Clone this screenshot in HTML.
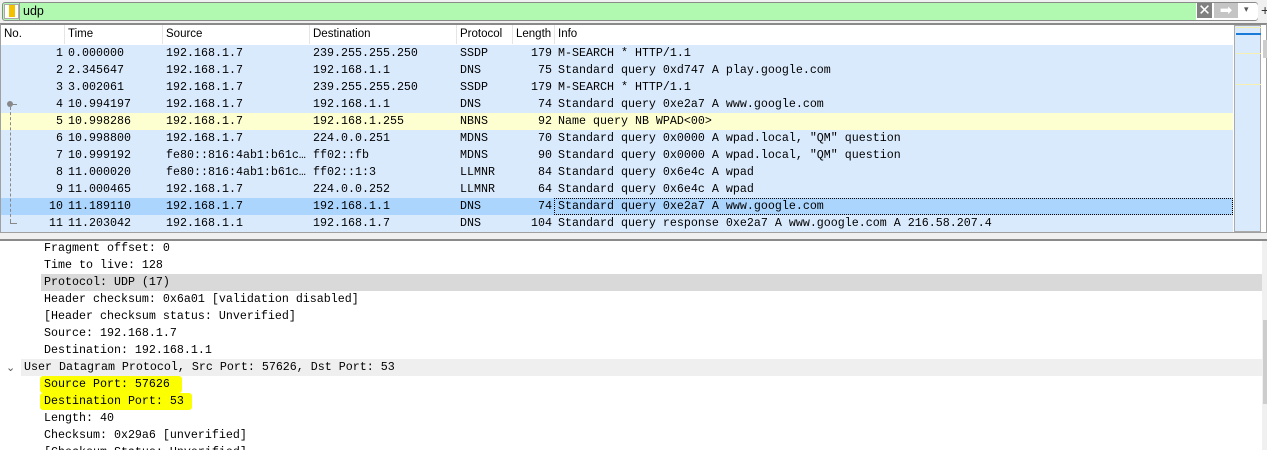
<!DOCTYPE html>
<html><head><style>
*{margin:0;padding:0;box-sizing:border-box}
html,body{width:1267px;height:450px;overflow:hidden}
body{background:#f0f0f0;position:relative;font-family:"Liberation Mono",monospace;font-size:11.66px;color:#000}
.a{position:absolute;white-space:pre}
.hdr{font-family:"Liberation Sans",sans-serif;font-size:11.5px}
.row{position:absolute;left:1px;width:1232px;height:17px;background:#daeafd}
.row span{position:absolute;top:1px;white-space:pre}
.d{position:absolute;height:17px;white-space:pre;line-height:17px}
</style></head><body>
<div class="a" style="left:2px;top:2px;width:1256px;height:19px;background:#b1f9b1;border:1px solid #8a8a8a;border-radius:3px"></div>
<div class="a" style="left:4px;top:4px;width:15px;height:15px;background:#fff;border:1px solid #aaa"></div>
<div class="a" style="left:9px;top:5px;width:6px;height:12px;background:#f2c200"></div>
<div class="a" style="left:19px;top:3px;height:17px;border-left:1px solid #999"></div>
<div class="a hdr" style="left:23px;top:4px;font-size:12.5px">udp</div>
<div class="a" style="left:1196px;top:3px;width:62px;height:17px;background:#fff;border-radius:0 3px 3px 0"></div>
<div class="a" style="left:1197px;top:3px;width:15px;height:15px;background:#808080;color:#fff;font-family:'Liberation Sans';font-size:15px;line-height:15px;text-align:center">✕</div>
<div class="a" style="left:1214px;top:3px;width:24px;height:15px;background:#c4c4c4;color:#fff;font-size:15px;line-height:15px;text-align:center;font-family:'DejaVu Sans'">➡</div>
<div class="a" style="left:1244px;top:5px;font-size:9px;color:#555;font-family:'DejaVu Sans'">▾</div>
<div class="a" style="left:1261px;top:2px;font-size:14px;font-family:'Liberation Sans';color:#333">+</div>
<div class="a" style="left:0;top:23px;width:1267px;height:210px;border:1px solid #a0a0a0;border-top:2px solid #8a8a8a;background:#fff"></div>
<div class="a hdr" style="left:1px;top:25px;width:1233px;height:19px;background:#fff"></div>
<div class="a hdr" style="left:4px;top:28px">No.</div>
<div class="a" style="left:64px;top:25px;height:19px;border-left:1px solid #e5e5e5"></div>
<div class="a hdr" style="left:68px;top:28px">Time</div>
<div class="a" style="left:162px;top:25px;height:19px;border-left:1px solid #e5e5e5"></div>
<div class="a hdr" style="left:166px;top:28px">Source</div>
<div class="a" style="left:309px;top:25px;height:19px;border-left:1px solid #e5e5e5"></div>
<div class="a hdr" style="left:313px;top:28px">Destination</div>
<div class="a" style="left:456px;top:25px;height:19px;border-left:1px solid #e5e5e5"></div>
<div class="a hdr" style="left:460px;top:28px">Protocol</div>
<div class="a" style="left:512px;top:25px;height:19px;border-left:1px solid #e5e5e5"></div>
<div class="a hdr" style="left:516px;top:28px">Length</div>
<div class="a" style="left:554px;top:25px;height:19px;border-left:1px solid #e5e5e5"></div>
<div class="a hdr" style="left:558px;top:28px">Info</div>

<div class="row" style="top:45px"><span style="right:1170px">1</span><span style="left:67px">0.000000</span><span style="left:165px">192.168.1.7</span><span style="left:312px">239.255.255.250</span><span style="left:459px">SSDP</span><span style="right:681px">179</span><span style="left:557px">M-SEARCH * HTTP/1.1</span></div>
<div class="row" style="top:62px"><span style="right:1170px">2</span><span style="left:67px">2.345647</span><span style="left:165px">192.168.1.7</span><span style="left:312px">192.168.1.1</span><span style="left:459px">DNS</span><span style="right:681px">75</span><span style="left:557px">Standard query 0xd747 A play.google.com</span></div>
<div class="row" style="top:79px"><span style="right:1170px">3</span><span style="left:67px">3.002061</span><span style="left:165px">192.168.1.7</span><span style="left:312px">239.255.255.250</span><span style="left:459px">SSDP</span><span style="right:681px">179</span><span style="left:557px">M-SEARCH * HTTP/1.1</span></div>
<div class="row" style="top:96px"><span style="right:1170px">4</span><span style="left:67px">10.994197</span><span style="left:165px">192.168.1.7</span><span style="left:312px">192.168.1.1</span><span style="left:459px">DNS</span><span style="right:681px">74</span><span style="left:557px">Standard query 0xe2a7 A www.google.com</span></div>
<div class="row" style="top:113px;background:#feffd0"><span style="right:1170px">5</span><span style="left:67px">10.998286</span><span style="left:165px">192.168.1.7</span><span style="left:312px">192.168.1.255</span><span style="left:459px">NBNS</span><span style="right:681px">92</span><span style="left:557px">Name query NB WPAD&lt;00&gt;</span></div>
<div class="row" style="top:130px"><span style="right:1170px">6</span><span style="left:67px">10.998800</span><span style="left:165px">192.168.1.7</span><span style="left:312px">224.0.0.251</span><span style="left:459px">MDNS</span><span style="right:681px">70</span><span style="left:557px">Standard query 0x0000 A wpad.local, "QM" question</span></div>
<div class="row" style="top:147px"><span style="right:1170px">7</span><span style="left:67px">10.999192</span><span style="left:165px">fe80::816:4ab1:b61c…</span><span style="left:312px">ff02::fb</span><span style="left:459px">MDNS</span><span style="right:681px">90</span><span style="left:557px">Standard query 0x0000 A wpad.local, "QM" question</span></div>
<div class="row" style="top:164px"><span style="right:1170px">8</span><span style="left:67px">11.000020</span><span style="left:165px">fe80::816:4ab1:b61c…</span><span style="left:312px">ff02::1:3</span><span style="left:459px">LLMNR</span><span style="right:681px">84</span><span style="left:557px">Standard query 0x6e4c A wpad</span></div>
<div class="row" style="top:181px"><span style="right:1170px">9</span><span style="left:67px">11.000465</span><span style="left:165px">192.168.1.7</span><span style="left:312px">224.0.0.252</span><span style="left:459px">LLMNR</span><span style="right:681px">64</span><span style="left:557px">Standard query 0x6e4c A wpad</span></div>
<div class="row" style="top:198px;background:#acd5fe"><span style="right:1170px">10</span><span style="left:67px">11.189110</span><span style="left:165px">192.168.1.7</span><span style="left:312px">192.168.1.1</span><span style="left:459px">DNS</span><span style="right:681px">74</span><span style="left:557px">Standard query 0xe2a7 A www.google.com</span></div>
<div class="a" style="left:554px;top:198px;width:679px;height:17px;border:1px dotted #000"></div>
<div class="row" style="top:215px"><span style="right:1170px">11</span><span style="left:67px">11.203042</span><span style="left:165px">192.168.1.1</span><span style="left:312px">192.168.1.7</span><span style="left:459px">DNS</span><span style="right:681px">104</span><span style="left:557px">Standard query response 0xe2a7 A www.google.com A 216.58.207.4</span></div>
<div class="a" style="left:7px;top:101px;width:6px;height:6px;border-radius:3px;background:#888"></div>
<div class="a" style="left:10px;top:104px;width:7px;border-top:1px solid #888"></div>
<div class="a" style="left:10px;top:107px;height:115px;border-left:1px dashed #888"></div>
<div class="a" style="left:10px;top:219px;height:5px;width:7px;border-left:1px solid #888;border-bottom:1px solid #888"></div>
<div class="a" style="left:1234px;top:25px;width:27px;height:207px;background:#daeafd;border:1px solid #aaa"></div>
<div class="a" style="left:1236px;top:27px;width:25px;border-top:1px solid #f6f0b0"></div>
<div class="a" style="left:1236px;top:33px;width:25px;border-top:2px solid #1a7ad8"></div>
<div class="a" style="left:1236px;top:53px;width:25px;border-top:1px solid #f6f0b0"></div>
<div class="a" style="left:1236px;top:84px;width:25px;border-top:1px solid #f6f0b0"></div>
<div class="a" style="left:1263px;top:40px;width:4px;height:18px;background:#cdcdcd"></div>
<div class="a" style="left:0;top:239px;width:1267px;height:211px;background:#fff;border-top:2px solid #8a8a8a"></div>
<div class="a" style="left:1262px;top:241px;width:5px;height:209px;background:#f0f0f0"></div>
<div class="a" style="left:1263px;top:320px;width:4px;height:84px;background:#cdcdcd"></div>
<div class="d" style="left:41px;top:274px;width:1221px;background:#d9d9d9"></div>
<div class="d" style="left:21px;top:359px;width:1241px;background:#efefef"></div>
<div class="d" style="left:44px;top:240px">Fragment offset: 0</div>
<div class="d" style="left:44px;top:257px">Time to live: 128</div>
<div class="d" style="left:44px;top:274px">Protocol: UDP (17)</div>
<div class="d" style="left:44px;top:291px">Header checksum: 0x6a01 [validation disabled]</div>
<div class="d" style="left:44px;top:308px">[Header checksum status: Unverified]</div>
<div class="d" style="left:44px;top:325px">Source: 192.168.1.7</div>
<div class="d" style="left:44px;top:342px">Destination: 192.168.1.1</div>
<div class="d" style="left:6px;top:359px;font-family:'DejaVu Sans';font-size:11px;color:#555">⌄</div>
<div class="d" style="left:24px;top:359px">User Datagram Protocol, Src Port: 57626, Dst Port: 53</div>
<div class="d" style="left:40px;top:376px;width:142px;background:#fbff00;border-radius:3px"></div>
<div class="d" style="left:40px;top:393px;width:152px;background:#fbff00;border-radius:3px"></div>
<div class="d" style="left:44px;top:376px">Source Port: 57626</div>
<div class="d" style="left:44px;top:393px">Destination Port: 53</div>
<div class="d" style="left:44px;top:410px">Length: 40</div>
<div class="d" style="left:44px;top:427px">Checksum: 0x29a6 [unverified]</div>
<div class="d" style="left:44px;top:444px">[Checksum Status: Unverified]</div>
</body></html>
